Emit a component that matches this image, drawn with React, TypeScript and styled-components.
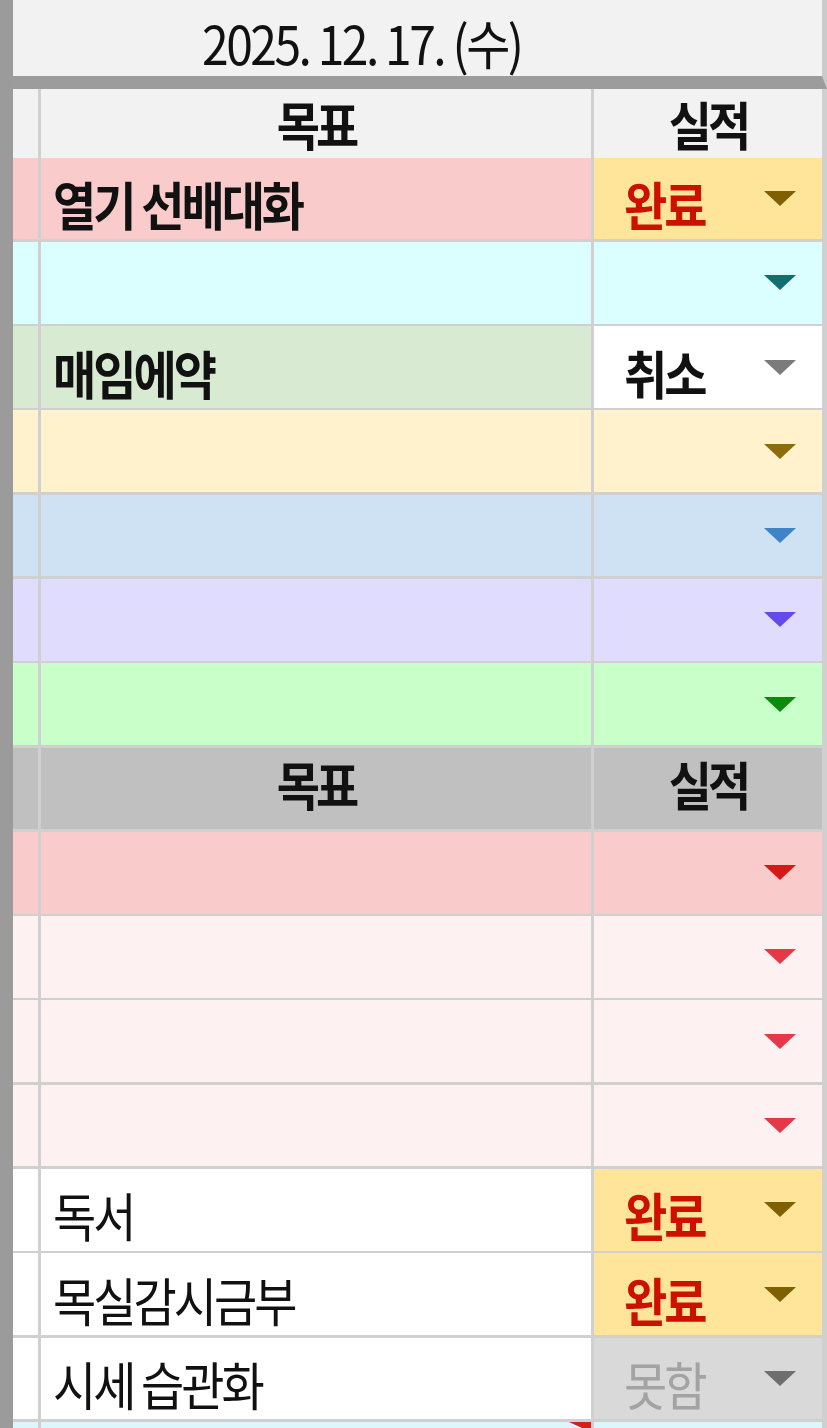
import styled, { createGlobalStyle } from 'styled-components';

const GlobalStyle = createGlobalStyle`
  html, body {
    margin: 0;
    padding: 0;
    background: #ffffff;
  }
  body {
    font-family: 'Noto Sans CJK KR', 'Noto Sans', sans-serif;
    overflow: hidden;
  }
`;

type Status = '완료' | '취소' | '못함' | '';

type RowData = {
  bg: string;
  goal?: string;
  bold?: boolean;
  status?: Status;
  arrow: string;
};

const STATUS_BG: Record<string, string> = {
  완료: '#ffe599',
  취소: '#ffffff',
  못함: '#d9d9d9',
};

const topRows: RowData[] = [
  { bg: '#f9cbcb', goal: '열기 선배대화', bold: true, status: '완료', arrow: '#7f6000' },
  { bg: '#dbffff', arrow: '#136f6f' },
  { bg: '#d9ead3', goal: '매임에약', bold: true, status: '취소', arrow: '#7b7b7b' },
  { bg: '#fff2cc', arrow: '#8c6d0e' },
  { bg: '#cfe2f3', arrow: '#3d85c6' },
  { bg: '#e0dcfd', arrow: '#6548ee' },
  { bg: '#c9ffc9', arrow: '#0c8a0c' },
];

const bottomRows: RowData[] = [
  { bg: '#f9cbcb', arrow: '#d81818' },
  { bg: '#fdf1f1', arrow: '#e63846' },
  { bg: '#fdf1f1', arrow: '#e63846' },
  { bg: '#fdf1f1', arrow: '#e63846' },
  { bg: '#ffffff', goal: '독서', status: '완료', arrow: '#7f6000' },
  { bg: '#ffffff', goal: '목실감시금부', status: '완료', arrow: '#7f6000' },
  { bg: '#ffffff', goal: '시세 습관화', status: '못함', arrow: '#6f6f6f' },
];

const Page = styled.div`
  display: flex;
  width: 827px;
  height: 1428px;
  overflow: hidden;
`;

const SideBar = styled.div`
  width: 13px;
  flex-shrink: 0;
  background: #9b9b9b;
`;

const Sheet = styled.div`
  flex: 1;
  display: flex;
  flex-direction: column;
`;

const DateHeader = styled.div`
  flex-shrink: 0;
  box-sizing: border-box;
  height: 89px;
  background: #f2f2f2;
  border-right: 5px solid #cbcbcb;
  border-bottom: 13px solid #9c9c9c;
  display: flex;
  align-items: center;
  padding: 6px 0 0 189px;
  font-size: 48px;
  letter-spacing: -2.5px;
  color: #111;
`;

const Table = styled.div`
  flex-shrink: 0;
  display: flex;
  flex-direction: column;
  gap: 2.6px;
  background: #d0d0d0;
  padding-right: 5px;
`;

const Row = styled.div<{ $height: number }>`
  flex-shrink: 0;
  display: grid;
  grid-template-columns: 25px 550px 228px;
  column-gap: 3px;
  height: ${({ $height }) => $height}px;
`;

const Cell = styled.div<{ $bg: string }>`
  position: relative;
  background: ${({ $bg }) => $bg};
  display: flex;
  align-items: center;
  min-width: 0;
`;

const Label = styled.span`
  display: inline-block;
  transform: scaleY(1.12);
  white-space: nowrap;
`;

const HeadCell = styled(Cell)`
  justify-content: center;
  font-size: 47px;
  font-weight: 700;
  letter-spacing: -4px;
  color: #111;
  padding-bottom: 10px;
  box-sizing: border-box;
`;

const GoalCell = styled(Cell)<{ $bold?: boolean }>`
  padding: 10px 0 0 12px;
  box-sizing: border-box;
  font-size: 47px;
  letter-spacing: -3px;
  font-weight: ${({ $bold }) => ($bold ? 700 : 400)};
  color: #111;
`;

const StatusCell = styled(Cell)`
  justify-content: space-between;
  padding: 10px 26px 0 30px;
  box-sizing: border-box;
`;

const StatusText = styled(Label)<{ $status: Status }>`
  font-size: 47px;
  letter-spacing: -3px;
  font-weight: ${({ $status }) => ($status === '못함' ? 400 : 700)};
  color: ${({ $status }) =>
    $status === '완료' ? '#cc1100' : $status === '못함' ? '#a3a3a3' : '#111'};
`;

const Arrow = styled.span<{ $color: string }>`
  width: 0;
  height: 0;
  margin-top: -10px;
  border-left: 16px solid transparent;
  border-right: 16px solid transparent;
  border-top: 15px solid ${({ $color }) => $color};
`;

const CommentMark = styled.span`
  position: absolute;
  top: 0;
  right: 0;
  width: 0;
  height: 0;
  border-left: 22px solid transparent;
  border-top: 10px solid #d02020;
`;

const ROW_H = 81.7;

function ColumnHeader({ bg, height }: { bg: string; height: number }) {
  return (
    <Row $height={height}>
      <Cell $bg={bg} />
      <HeadCell $bg={bg}>
        <Label>목표</Label>
      </HeadCell>
      <HeadCell $bg={bg}>
        <Label>실적</Label>
      </HeadCell>
    </Row>
  );
}

function GoalRow({ row }: { row: RowData }) {
  const statusBg = row.status ? STATUS_BG[row.status] : row.bg;
  return (
    <Row $height={ROW_H}>
      <Cell $bg={row.bg} />
      <GoalCell $bg={row.bg} $bold={row.bold}>
        {row.goal && <Label>{row.goal}</Label>}
      </GoalCell>
      <StatusCell $bg={statusBg}>
        <StatusText $status={row.status ?? ''}>{row.status}</StatusText>
        <Arrow $color={row.arrow} />
      </StatusCell>
    </Row>
  );
}

export default function App() {
  return (
    <>
      <GlobalStyle />
      <Page>
        <SideBar />
        <Sheet>
          <DateHeader>
            <Label>2025. 12. 17. (수)</Label>
          </DateHeader>
          <Table>
            <ColumnHeader bg="#f2f2f2" height={66} />
            {topRows.map((row, i) => (
              <GoalRow key={`t${i}`} row={row} />
            ))}
            <ColumnHeader bg="#c0c0c0" height={ROW_H} />
            {bottomRows.map((row, i) => (
              <GoalRow key={`b${i}`} row={row} />
            ))}
            <Row $height={ROW_H}>
              <Cell $bg="#dcf7fb" />
              <Cell $bg="#dcf7fb">
                <CommentMark />
              </Cell>
              <Cell $bg="#dcf7fb" />
            </Row>
          </Table>
        </Sheet>
      </Page>
    </>
  );
}
